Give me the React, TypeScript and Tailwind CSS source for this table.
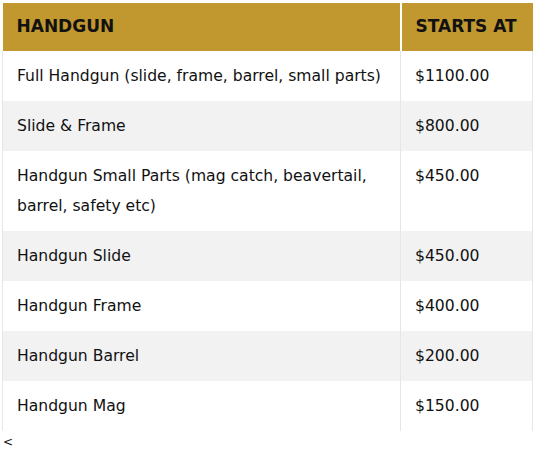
const rows: { name: string; price: string }[] = [
  { name: "Full Handgun (slide, frame, barrel, small parts)", price: "$1100.00" },
  { name: "Slide & Frame", price: "$800.00" },
  { name: "Handgun Small Parts (mag catch, beavertail, barrel, safety etc)", price: "$450.00" },
  { name: "Handgun Slide", price: "$450.00" },
  { name: "Handgun Frame", price: "$400.00" },
  { name: "Handgun Barrel", price: "$200.00" },
  { name: "Handgun Mag", price: "$150.00" },
];

export default function App() {
  return (
    <div className="bg-white w-[534px] h-[453px] pt-[3px] pl-[2px] text-[#111] font-['DejaVu_Sans',sans-serif]">
      <table className="w-[531px] border-collapse table-fixed">
        <colgroup>
          <col className="w-[398px]" />
          <col />
        </colgroup>
        <thead>
          <tr className="bg-[#c1972f] h-[48px]">
            <th className="text-left font-bold text-[17px] pl-[14px] border-r-2 border-white">HANDGUN</th>
            <th className="text-left font-bold text-[17px] pl-[14px]">STARTS AT</th>
          </tr>
        </thead>
        <tbody>
          {rows.map((r, i) => (
            <tr key={i} className={i % 2 === 1 ? "bg-[#f2f2f2]" : "bg-white"}>
              <td className="align-top py-[10px] pl-[14px] pr-[8px] text-[15.6px] leading-[30px] border-l border-r border-[#e6e6e6]">
                {r.name}
              </td>
              <td className="align-top py-[10px] pl-[14px] text-[15.6px] leading-[30px] border-r border-[#e6e6e6]">
                {r.price}
              </td>
            </tr>
          ))}
        </tbody>
      </table>
      <div className="text-[12px] leading-[14px] mt-[4px] pl-[1px] font-['DejaVu_Sans',sans-serif]">&lt;</div>
    </div>
  );
}
